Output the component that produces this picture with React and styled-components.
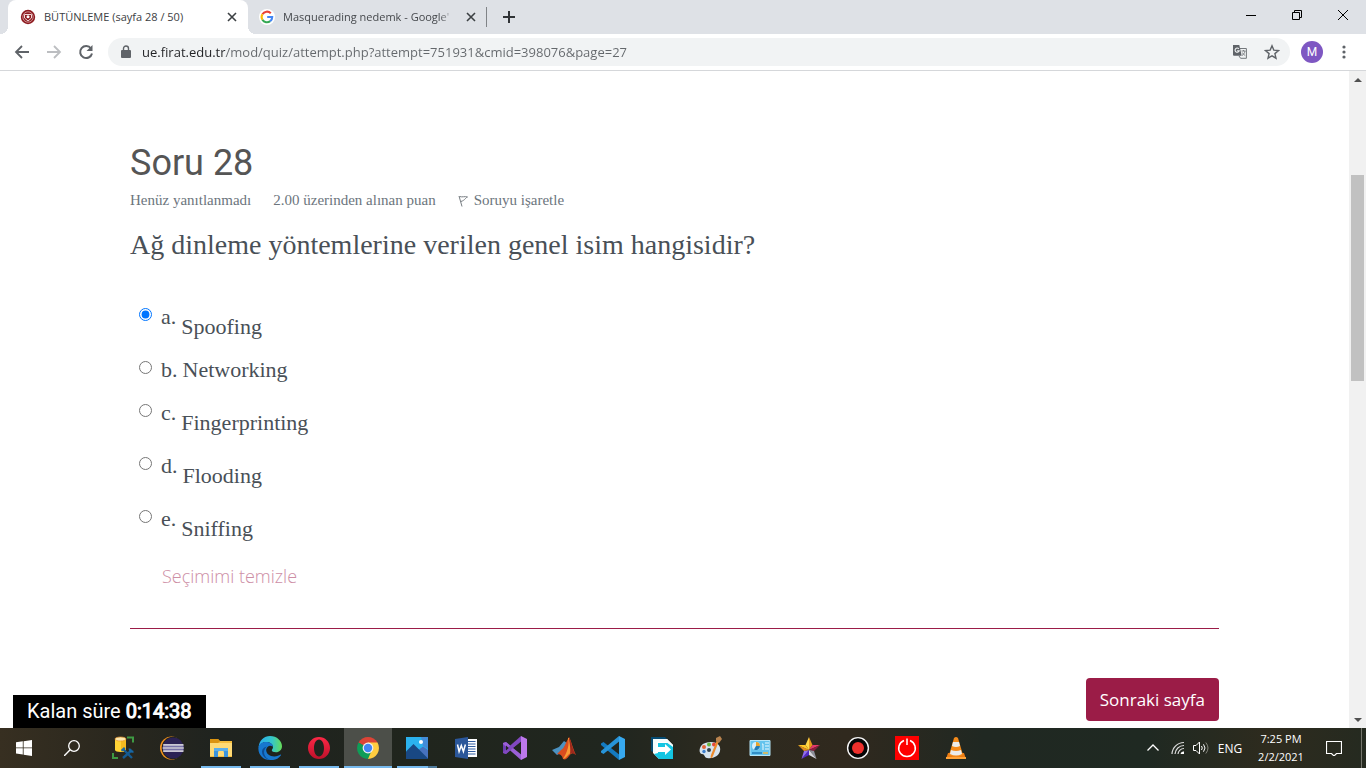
import React, { useState } from "react";
import styled, { createGlobalStyle, css } from "styled-components";

const UI = `"Segoe UI", "Open Sans", "Noto Sans", sans-serif`;
const SERIF = `Georgia, "Liberation Serif", serif`;

const GlobalStyle = createGlobalStyle`
  *, *::before, *::after { box-sizing: border-box; }
  body { margin: 0; background: #fff; font-family: ${UI}; }
  button { font: inherit; color: inherit; background: none; border: 0; padding: 0; cursor: pointer; }
  svg { display: block; flex: none; }
`;

const Screen = styled.div`
  min-height: 100vh;
  display: flex;
  flex-direction: column;
`;

/* Browser chrome */
const TabStrip = styled.div`
  display: flex;
  align-items: stretch;
  height: 34px;
  padding-left: 8px;
  background: #dee1e6;
`;

const Tab = styled.div`
  position: relative;
  display: flex;
  align-items: center;
  gap: 8px;
  width: ${(p) => (p.$active ? 240 : 238)}px;
  padding: ${(p) => (p.$active ? "0 8px 0 12px" : "0 7px 0 11px")};
  border-radius: 8px 8px 0 0;
  color: ${(p) => (p.$active ? "#3c4043" : "#45484c")};
  background: ${(p) => (p.$active ? "#fff" : "transparent")};
  font-size: 11px;
  line-height: 16px;

  ${(p) =>
    p.$active &&
    css`
      &::before,
      &::after {
        content: "";
        position: absolute;
        bottom: 0;
        width: 8px;
        height: 8px;
      }
      &::before {
        right: 100%;
        background: radial-gradient(circle at 0 0, transparent 8px, #fff 8px);
      }
      &::after {
        left: 100%;
        background: radial-gradient(circle at 100% 0, transparent 8px, #fff 8px);
      }
    `}
`;

const TabTitle = styled.span`
  flex: 1;
  min-width: 0;
  white-space: nowrap;
  ${(p) => p.$fade && css`mask-image: linear-gradient(to left, transparent, #000 16px);`}
`;

const IconButton = styled.button`
  display: flex;
  align-items: center;
  justify-content: center;
  flex: none;
  width: ${(p) => p.$w || 16}px;
  height: ${(p) => p.$h || 16}px;
`;

const TabDivider = styled.div`
  width: 1px;
  height: 20px;
  align-self: center;
  background: #808387;
`;

const WindowControls = styled.div`
  display: flex;
  margin-left: auto;
`;

const Toolbar = styled.div`
  display: flex;
  align-items: center;
  height: 37px;
  padding: 0 12px 0 6px;
  background: #fff;
  border-bottom: 1px solid #d5d7da;
`;

const NavButtons = styled.div`
  display: flex;
  margin-right: 6px;
`;

const AddressBar = styled.div`
  flex: 1;
  display: flex;
  align-items: center;
  gap: 8px;
  height: 28px;
  padding: 0 2px 0 12px;
  border-radius: 14px;
  background: #f1f3f4;
`;

const AddressInput = styled.input`
  flex: 1;
  min-width: 0;
  height: 28px;
  padding: 0 0 0 2px;
  border: 0;
  outline: 0;
  color: transparent;
  background: linear-gradient(to right, #202124 85px, #64686c 85px);
  background-clip: text;
  font-family: ${UI};
  font-size: 13px;
`;

const Avatar = styled.button`
  width: 22px;
  height: 22px;
  margin: 0 11px;
  border-radius: 50%;
  background: #7e57c2;
  color: #fff;
  font-family: Roboto, sans-serif;
  font-size: 12px;
  line-height: 22px;
`;

/* Page */
const Viewport = styled.div`
  position: relative;
  flex: 1;
  display: flex;
`;

const Main = styled.main`
  flex: 1;
  padding: 70px 130px 7px;
`;

const QuestionTitle = styled.h3`
  margin: 0;
  color: #555;
  font-family: Roboto, sans-serif;
  font-size: 36px;
  font-weight: 400;
  line-height: 44px;
`;

const QuestionInfo = styled.div`
  display: flex;
  gap: 22px;
  margin-top: 5px;
  color: #6c757d;
  font-family: ${SERIF};
  font-size: 15px;
  line-height: 20px;
`;

const FlagLink = styled.a`
  display: flex;
  align-items: center;
  gap: 5px;
  color: inherit;
  text-decoration: none;
`;

const Fieldset = styled.fieldset`
  margin: 0;
  padding: 17px 0 0;
  border: 0;
  color: #495057;
  font-family: ${SERIF};
`;

const QuestionText = styled.legend`
  float: left;
  width: 100%;
  margin: 0 0 37px;
  padding: 0;
  font-size: 28px;
  line-height: 36px;
`;

const Option = styled.div`
  display: flex;
  align-items: flex-start;
  clear: both;
  height: ${(p) => (p.$flat ? 43 : 53)}px;
  padding-left: 9px;
`;

const Radio = styled.input`
  width: 13px;
  height: 13px;
  margin: 8px 9px 0 0;
`;

const OptionLabel = styled.label`
  display: flex;
  gap: 5px;
  font-size: 22px;
  line-height: 34px;
`;

const Answer = styled.span`
  padding-top: ${(p) => (p.$flat ? 0 : 10)}px;
`;

const ClearLink = styled.a`
  display: inline-block;
  margin: 7px 0 0 32px;
  color: #cd8ea5;
  font-size: 18px;
  font-weight: 300;
  line-height: 28px;
  text-decoration: none;
`;

const Actions = styled.div`
  display: flex;
  justify-content: flex-end;
  margin-top: 38px;
  padding-top: 49px;
  border-top: 1px solid #9b1c47;
`;

const NextButton = styled.button`
  height: 43px;
  padding: 0 14px;
  border-radius: 4px;
  background: #9b1c47;
  color: #fff;
  font-size: 17px;
`;

const Timer = styled.div`
  position: absolute;
  left: 13px;
  bottom: 0;
  padding: 0 14px;
  background: #000;
  color: #fff;
  font-family: Roboto, sans-serif;
  font-size: 20px;
  line-height: 33px;

  b {
    font-weight: 400;
    -webkit-text-stroke: 1px #fff;
  }
`;

const Scrollbar = styled.div`
  display: flex;
  flex-direction: column;
  width: 17px;
  background: #f1f1f1;
`;

const Track = styled.div`
  flex: 1;
  padding: 87px 2px 0;
`;

const Thumb = styled.div`
  height: 206px;
  background: #c1c1c1;
`;

/* Taskbar */
const Taskbar = styled.div`
  display: flex;
  height: 40px;
  color: #fff;
  background: linear-gradient(
    to right,
    #372f21 0,
    #29271e 9%,
    #1f231f 16%,
    #20251d 30%,
    #20261f 45%,
    #2d2a1f 53%,
    #30291e 62%,
    #202822 72%,
    #1f2922 84%,
    #2e2b1e 93%,
    #252a20 100%
  );
`;

const Apps = styled.div`
  display: flex;
  gap: 1px;
  margin-left: 3px;
`;

const TaskButton = styled.button`
  position: relative;
  display: flex;
  align-items: center;
  justify-content: center;
  width: 48px;
  height: 40px;
  background: ${(p) => (p.$state === "active" ? "#4c4f49" : "transparent")};

  &::after {
    content: "";
    position: absolute;
    bottom: 0;
    height: 2px;
    left: ${(p) => (p.$state === "active" ? 0 : 4)}px;
    right: ${(p) => (p.$state === "active" ? 0 : 4)}px;
    background: ${(p) =>
      !p.$state
        ? "transparent"
        : p.$state === "group"
        ? "linear-gradient(to right, #76b9ed 31px, #4f7b9c 31px)"
        : "#76b9ed"};
  }
`;

const Tray = styled.div`
  display: flex;
  align-items: center;
  margin-left: auto;
  font-size: 12px;
`;

const Language = styled.button`
  width: 26px;
  margin: 0 13px 0 5px;
  font-size: 12px;
`;

const Clock = styled.button`
  width: 50px;
  font-size: 11px;
  line-height: 18px;
`;

const ShowDesktop = styled.button`
  width: 5px;
  height: 40px;
  border-left: 1px solid #74756c;
`;

const Svg = ({ s = 24, h, v, children, ...rest }) => (
  <svg width={s} height={h || s} viewBox={v || `0 0 ${s} ${h || s}`} fill="none" aria-hidden="true" {...rest}>
    {children}
  </svg>
);

const Stroke = ({ d, s = 16, h, w = 2, c = "#5f6368", ...rest }) => (
  <Svg s={s} h={h}>
    <path d={d} stroke={c} strokeWidth={w} {...rest} />
  </Svg>
);

const FiratIcon = () => (
  <Svg s={16}>
    <circle cx="8" cy="8" r="7.2" fill="#8e1b20" />
    <circle cx="8" cy="8" r="5.2" stroke="#d9a9ab" strokeWidth=".8" />
    <path d="M4.500 5.500h7v3.500L8 12 4.500 9z" stroke="#f1dada" strokeWidth="1" />
    <circle cx="8" cy="7.800" r="1.500" fill="#fff" />
  </Svg>
);

const GoogleIcon = () => (
  <Svg s={16}>
    <circle cx="8" cy="8" r="8" fill="#fff" />
    <path d="M3.4 5.3a5.3 5.3 0 0 1 8.4-1" stroke="#ea4335" strokeWidth="2.1" />
    <path d="M3.4 5.3a5.3 5.3 0 0 0 0 5.4" stroke="#fbbc05" strokeWidth="2.1" />
    <path d="M3.4 10.7a5.3 5.3 0 0 0 7.8 1.5" stroke="#34a853" strokeWidth="2.1" />
    <path d="M11.2 12.2A5.3 5.3 0 0 0 13.2 8H8.2" stroke="#4285f4" strokeWidth="2.1" />
  </Svg>
);

const TranslateIcon = () => (
  <Svg s={16}>
    <path d="M7 4.5h7.4v9.8H8.6L7 12" stroke="#74787c" strokeWidth="1" fill="#f1f3f4" />
    <path d="M1 1h6.3l2.4 10.8H2a1 1 0 0 1-1-1z" fill="#5f6368" />
    <path d="M6.8 4.8a2.1 2.1 0 1 0 .4 2H5.1" stroke="#f1f3f4" strokeWidth="1.1" />
    <path d="M9.5 7h4M11.5 6v1M13 7c-.4 2-1.4 3.5-3 4.5M10.3 8.5c.7 1.4 1.5 2.3 2.9 3" stroke="#74787c" strokeWidth=".9" />
  </Svg>
);

const StarIcon = () => (
  <Svg s={16}>
    <path d="M8 1.8l1.8 4.3 4.7.4-3.6 3.1 1.1 4.6L8 11.8l-4 2.4 1.1-4.6L1.5 6.5l4.7-.4z" stroke="#5f6368" strokeWidth="1.4" />
  </Svg>
);

const ICONS = {
  Sql: (
    <>
      <path d="M16 1.500h6v5M2 17v5h5" stroke="#3e9a43" strokeWidth="2" />
      <path d="M4 3v11c0 1.200 2.500 2 5.500 2s5.500-.800 5.500-2V3z" fill="#ffd335" />
      <path d="M10 3h5v11c0 1.200-2 1.900-5 2z" fill="#f3b91f" />
      <ellipse cx="9.5" cy="3" rx="5.500" ry="2" fill="#fce7ad" stroke="#e79429" strokeWidth=".7" />
      <path d="M12 13l9 9M21 14l-9 8" stroke="#155a91" strokeWidth="2.400" />
      <path d="M10.500 14.800l3.200-3M18.500 12.500c.200 2.500 1.500 3.500 4 3.300" stroke="#1767a5" strokeWidth="2" />
    </>
  ),
  Eclipse: (
    <>
      <circle cx="11.500" cy="12" r="11.500" fill="#f7941e" />
      <circle cx="12.900" cy="12" r="11.200" fill="#20231f" />
      <circle cx="13.200" cy="12" r="10.600" fill="#2c2255" />
      <path d="M3.200 9h20.300M2.700 12h21M3.200 15h20.300" stroke="#fff" strokeWidth="1.400" />
      <path d="M3 10.500h20.500M3 13.500h20.500" stroke="#7771a8" strokeWidth="1.400" />
    </>
  ),
  Explorer: (
    <>
      <path d="M1 3h8l2 2h12v16H1z" fill="#f5bd3d" />
      <path d="M1 3h8l2 2.5L9 7H1z" fill="#dc9410" />
      <path d="M1 7h22v13H1z" fill="#ffda75" />
      <path d="M5 21v-9h14v9h-4v-4a3 3 0 0 0-6 0v4z" fill="#3c94dd" />
      <path d="M5 12h14v3H5z" fill="#5caee9" />
    </>
  ),
  Edge: (
    <>
      <defs>
        <linearGradient id="eg" x1="2" y1="8" x2="24" y2="8" gradientUnits="userSpaceOnUse">
          <stop stopColor="#2bb0ec" />
          <stop offset=".55" stopColor="#35c7ca" />
          <stop offset="1" stopColor="#66dd58" />
        </linearGradient>
      </defs>
      <path d="M0.6 11C1.5 4 6 0 12 0c7 0 12 5 12 10.2 0 3.6-2.8 6-6 6-2.7 0-4.2-1-4.2-2 0-.8 1.2-1.3 1.2-3.2C15 8 11.8 6 8.3 6 4.800 6 2 8 .6 11z" fill="url(#eg)" />
      <path d="M.4 12C.6 8 4 6 8 6c3.600 0 7 2 7 4.700 0 0-3-2-5.200 0-3.300 3-1.200 8 3.200 9.300 4.500 1.300 8-.5 9.200-1.300.7-.4 1 .2.6.7A12 12 0 0 1 12 24C5.200 24 0 18.700.4 12z" fill="#1778cf" />
      <path d="M8.800 10.500c-5 4.500-2.800 11.700 3.500 13.300C8 23.600 4 20 4 15.500c0-2.300 1.800-4.300 4.800-5z" fill="#0d4d94" />
    </>
  ),
  Opera: (
    <>
      <defs>
        <linearGradient id="og" x1="0" y1="0" x2="0" y2="24" gradientUnits="userSpaceOnUse">
          <stop stopColor="#ff2947" />
          <stop offset="1" stopColor="#bb1029" />
        </linearGradient>
      </defs>
      <path fillRule="evenodd" d="M12 1c6 0 11 4.900 11 11s-5 11-11 11S1 18.100 1 12 6 1 12 1zm0 2.500c-3 0-5 3.800-5 8.500s2 8.500 5 8.500 5-3.800 5-8.500-2-8.500-5-8.500z" fill="url(#og)" />
    </>
  ),
  Chrome: (
    <>
      <path d="M12 12L2.500 6.500A11 11 0 0 1 21.500 6.500z" fill="#db4437" />
      <path d="M12 12L2.500 6.500A11 11 0 0 0 12 23l4.700-8.300z" fill="#0f9d58" />
      <path d="M12 12h4.700L12 23A11 11 0 0 0 21.500 6.500H12z" fill="#ffcd40" />
      <circle cx="12" cy="12" r="5.400" fill="#f1f1f1" />
      <circle cx="12" cy="12" r="4.200" fill="#4285f4" />
    </>
  ),
  Photos: (
    <>
      <path d="M1 1h22v22H1z" fill="#2bb2ee" />
      <path d="M12 15l6-4.500 5 3.500v9H12z" fill="#4772be" />
      <path d="M16 1h7v12l-5-3z" fill="#438cd8" />
      <path d="M1 15.500L8.500 8 23 22.500V23H1z" fill="#194883" />
      <circle cx="16" cy="6" r="2" fill="#fff" />
    </>
  ),
  Word: (
    <>
      <path d="M13 3h10v18H13z" fill="#fff" />
      <path d="M14 5.500h7.500M14 8h7.500M14 10.500h7.500M14 13h7.500M14 15.500h7.500M14 18h7.500" stroke="#315ea2" strokeWidth="1.200" />
      <path d="M1 3l13-2v22L1 21z" fill="#2b579a" />
      <path d="M3.500 8.500l1.600 7 2.200-6 2.100 6 2-7" stroke="#fff" strokeWidth="1.500" />
    </>
  ),
  VisualStudio: (
    <>
      <path d="M0 7l3-1 4 3.500v5L3 18l-3-1z" fill="#6d3db2" />
      <path d="M0 7l3-1 17 14-2 4L0 8z" fill="#9a5fd6" />
      <path d="M0 17l3 1L20 4l-2-4L0 16z" fill="#8148c0" />
      <path d="M3 9.500v5L5.800 12zM10.500 12l7.500-5.500v11z" fill="#20251e" />
      <path d="M18 0l6 3v18l-6 3z" fill="#bd78ec" />
    </>
  ),
  Matlab: (
    <>
      <path d="M0 14l7-3 5-6 3 2-6 10-4 2z" fill="#4b91c1" />
      <path d="M5 18l4-4c3-1 5-8 8-13 2 3 4 12 7 18-3-3-5-2-7 1-2 3-4 4-6 3-1-4-3-5-6-5z" fill="#d94d1f" />
      <path d="M16 2c2 6-1 15-5 21 4-1 5-6 9-6-1-5-2-11-3-15z" fill="#fa9b35" />
      <path d="M17 1c3 6 3 12 7 18-3-2-4-2-6-1 1-6-1-13-1-17z" fill="#9e291c" />
    </>
  ),
  VsCode: (
    <>
      <path d="M0 7.500L2.500 6 20 20l-2 4L0 9z" fill="#147ac0" />
      <path d="M0 16.500L2.500 18 20 4l-2-4L0 15z" fill="#2794d8" />
      <path d="M18 0l6 3v18l-6 3z" fill="#37a9ef" />
    </>
  ),
  Transfer: (
    <>
      <path d="M1 1h14l3 3v12l-9 3-8-4z" fill="#064b72" />
      <path d="M3 3h14l6 6v14H9l-6-6z" fill="#fff" />
      <path d="M8 7h11l4 3v13H9l-5-5 4-1z" fill="#13c5e2" />
      <path d="M17 3l6 6v2l-7-5H7L5 17l-2-1V3z" fill="#f4fcfd" />
      <path d="M7 11h8V8l6 5.500-6 5.500v-3H7z" fill="#fff" />
    </>
  ),
  Paint: (
    <>
      <path d="M12 6c7 0 10 4 9 9s-7 8-13 7c-3-.500-2-4-5-4-3-.500-3-5-1-8s6-4 10-4z" fill="#d6e3ef" />
      <circle cx="5" cy="11" r="2" fill="#e16437" /><circle cx="10" cy="8.500" r="2" fill="#67b440" /><circle cx="15" cy="8.500" r="2" fill="#e54939" /><circle cx="5" cy="15.500" r="1.700" fill="#3b7dcd" /><circle cx="10" cy="14" r="2" fill="#31404c" />
      <path d="M20 5l-6 15c-2 4-3 2-2-1l6-15z" fill="#ec8a2d" />
      <path d="M17 2l4-2 2 3-3 4-3-2z" fill="#b9834e" />
    </>
  ),
  ControlPanel: (
    <>
      <path d="M2 4.500h20v15H2z" fill="#65c3ed" stroke="#b6e5f8" />
      <circle cx="8" cy="10" r="4" fill="#d9f0fa" /><path d="M8 10V6a4 4 0 0 1 4 4z" fill="#e7a42e" /><path d="M8 10h4a4 4 0 0 1-6 3.500z" fill="#247bb4" />
      <path d="M14 8h1v6M17 7h4M17 10h4M17 13h4" stroke="#eaf8ff" /><path d="M4 17h10" stroke="#227cb8" strokeWidth="1.500" /><path d="M15 17h5" stroke="#efb642" strokeWidth="1.500" />
    </>
  ),
  StarApp: (
    <>
      <path d="M12 1L8.500 9 12 14z" fill="#ffd84a" />
      <path d="M12 1l3.500 8-3.500 5z" fill="#e59a1c" />
      <path d="M15.500 9H23l-11 5z" fill="#e33b69" />
      <path d="M23 9l-6 6-5-1z" fill="#8e1e3e" />
      <path d="M12 14l5 1 2.500 8z" fill="#8d8f9b" />
      <path d="M12 14v5l7.500 4z" fill="#d7d7df" />
      <path d="M12 14l-7.500 9 7.500-4z" fill="#5126c9" />
      <path d="M7 15l5-1-7.500 9z" fill="#8f6cf0" />
      <path d="M1 9l11 5-5 1z" fill="#e38b1e" />
      <path d="M1 9h7.500l3.500 5z" fill="#ffc928" />
    </>
  ),
  Recorder: (
    <>
      <circle cx="12" cy="12" r="10.400" fill="#060606" stroke="#f5f5f5" strokeWidth="1.400" />
      <circle cx="12" cy="12" r="6" fill="#ee302c" />
    </>
  ),
  Power: (
    <>
      <path d="M0 0h24v24H0z" fill="#fe0000" />
      <path d="M9 4.500a8.300 8.300 0 1 0 6 0M12 2.500V9" stroke="#fff" strokeWidth="1.500" />
    </>
  ),
  Vlc: (
    <>
      <path d="M4 17h16l2 6H2z" fill="#ec7b12" />
      <path d="M10 2q2-2 4 0l5 17q-7 4-14 0z" fill="#f58b1b" />
      <path d="M9 6h6l1 4q-4 2-8 0zM7 14q5 2 10 0l1 4q-6 3-12 0z" fill="#ececeb" />
      <path d="M2 22h20" stroke="#ffa338" strokeWidth="2" />
    </>
  ),
};

const APPS = [
  ["Sql"],
  ["Eclipse"],
  ["Explorer", "open"],
  ["Edge", "open"],
  ["Opera", "open"],
  ["Chrome", "active"],
  ["Photos", "group"],
  ["Word"],
  ["VisualStudio"],
  ["Matlab"],
  ["VsCode"],
  ["Transfer"],
  ["Paint"],
  ["ControlPanel"],
  ["StarApp"],
  ["Recorder"],
  ["Power"],
  ["Vlc"],
];

const OPTIONS = [
  { key: "a", text: "Spoofing" },
  { key: "b", text: "Networking", flat: true },
  { key: "c", text: "Fingerprinting" },
  { key: "d", text: "Flooding" },
  { key: "e", text: "Sniffing" },
];

const CLOSE = "M4 4l8 8M12 4l-8 8";

function BrowserChrome() {
  return (
    <header>
      <TabStrip>
        <Tab $active>
          <FiratIcon />
          <TabTitle>BÜTÜNLEME (sayfa 28 / 50)</TabTitle>
          <IconButton aria-label="Close tab"><Stroke d={CLOSE} w={1.6} c="#3c4043" /></IconButton>
        </Tab>
        <Tab>
          <GoogleIcon />
          <TabTitle $fade>Masquerading nedemk - Google'</TabTitle>
          <IconButton aria-label="Close tab"><Stroke d={CLOSE} w={1.6} c="#3c4043" /></IconButton>
        </Tab>
        <TabDivider />
        <IconButton $w={44} $h={34} aria-label="New tab"><Stroke d="M8 2v12M2 8h12" c="#303336" /></IconButton>
        <WindowControls>
          <IconButton $w={46} $h={29} aria-label="Minimize"><Stroke s={10} d="M0 5.500h10" w={1} c="#000" /></IconButton>
          <IconButton $w={46} $h={29} aria-label="Restore"><Stroke s={10} d="M.5 2.500h7v7h-7zM2.500 2.500v-2h7v7h-2" w={1} c="#000" /></IconButton>
          <IconButton $w={46} $h={29} aria-label="Close"><Stroke s={10} d="M0 0l10 10M10 0L0 10" w={1} c="#000" /></IconButton>
        </WindowControls>
      </TabStrip>
      <Toolbar>
        <NavButtons>
          <IconButton $w={32} $h={28} aria-label="Back"><Stroke d="M15 8H2M8 2L2 8l6 6" w={1.800} /></IconButton>
          <IconButton $w={32} $h={28} aria-label="Forward"><Stroke d="M1 8h13M8 2l6 6-6 6" w={1.800} c="#bcbec1" /></IconButton>
          <IconButton $w={32} $h={28} aria-label="Reload">
            <Svg s={16}>
              <path d="M13 4.500A6 6 0 1 0 14 9.500" stroke="#5f6368" strokeWidth="2" />
              <path d="M14.500 1v6h-6z" fill="#5f6368" />
            </Svg>
          </IconButton>
        </NavButtons>
        <AddressBar>
          <Svg s={12} h={14}>
            <path d="M2 5h8a1 1 0 0 1 1 1v6a1 1 0 0 1-1 1H2a1 1 0 0 1-1-1V6a1 1 0 0 1 1-1z" fill="#5f6368" />
            <path d="M3.500 5.500V3.500a2.500 2.500 0 0 1 5 0v2" stroke="#5f6368" strokeWidth="1.400" />
          </Svg>
          <AddressInput
            aria-label="Address"
            defaultValue="ue.firat.edu.tr/mod/quiz/attempt.php?attempt=751931&cmid=398076&page=27"
          />
          <IconButton aria-label="Translate"><TranslateIcon /></IconButton>
          <IconButton $w={32} $h={28} aria-label="Bookmark"><StarIcon /></IconButton>
        </AddressBar>
        <Avatar aria-label="Profile">M</Avatar>
        <IconButton $w={20} aria-label="Menu">
          <Svg s={4} h={16}>
            <g fill="#5f6368"><circle cx="2" cy="3" r="1.600" /><circle cx="2" cy="8" r="1.600" /><circle cx="2" cy="13" r="1.600" /></g>
          </Svg>
        </IconButton>
      </Toolbar>
    </header>
  );
}

function Question() {
  const [selected, setSelected] = useState("a");
  return (
    <>
      <QuestionTitle>Soru 28</QuestionTitle>
      <QuestionInfo>
        <span>Henüz yanıtlanmadı</span>
        <span>2.00 üzerinden alınan puan</span>
        <FlagLink href="#">
          <Svg s={11} h={13}>
            <path d="M1 2l3 10.500M1.500 2.500c3 1 5-.500 8 .5-2 .5-2 3-6.500 4.500" stroke="#777d82" />
          </Svg>
          Soruyu işaretle
        </FlagLink>
      </QuestionInfo>
      <Fieldset>
        <QuestionText>Ağ dinleme yöntemlerine verilen genel isim hangisidir?</QuestionText>
        {OPTIONS.map(({ key, text, flat }) => (
          <Option key={key} $flat={flat}>
            <Radio
              type="radio"
              name="answer"
              id={`answer-${key}`}
              checked={selected === key}
              onChange={() => setSelected(key)}
            />
            <OptionLabel htmlFor={`answer-${key}`}>
              <span>{key}.</span>
              <Answer $flat={flat}>{text}</Answer>
            </OptionLabel>
          </Option>
        ))}
      </Fieldset>
      <ClearLink href="#">Seçimimi temizle</ClearLink>
      <Actions>
        <NextButton>Sonraki sayfa</NextButton>
      </Actions>
    </>
  );
}

function SystemTaskbar() {
  return (
    <Taskbar>
      <TaskButton aria-label="Start">
        <Svg s={16}>
          <path d="M0 2.300L6.800 1.300v6.200H0zM7.600 1.200L16 0v7.500H7.600zM0 8.300h6.800v6.300L0 13.600zM7.600 8.300H16V16l-8.400-1.300z" fill="#fff" />
        </Svg>
      </TaskButton>
      <TaskButton aria-label="Search">
        <Svg s={16}>
          <circle cx="10" cy="6" r="5.300" stroke="#fff" strokeWidth="1.300" />
          <path d="M6.200 9.800L0 16" stroke="#fff" strokeWidth="1.400" />
        </Svg>
      </TaskButton>
      <Apps>
        {APPS.map(([name, state]) => (
          <TaskButton key={name} $state={state} aria-label={name}>
            <Svg s={24}>{ICONS[name]}</Svg>
          </TaskButton>
        ))}
      </Apps>
      <Tray>
        <IconButton $w={26} aria-label="Hidden icons"><Stroke s={12} h={8} d="M.5 6.500L6 1l5.500 5.500" w={1.300} c="#fff" /></IconButton>
        <IconButton $w={24} aria-label="Network">
          <Svg s={14}>
            <path d="M1 13A12 12 0 0 1 13 1.500M4 13a9 9 0 0 1 9-8.500M7 13a6 6 0 0 1 6-5.500" stroke="#ddd" strokeWidth="1.200" />
            <path d="M9.500 13a3 3 0 0 1 3.500-2.500V13z" fill="#fff" />
          </Svg>
        </IconButton>
        <IconButton $w={22} aria-label="Volume">
          <Svg s={16}>
            <path d="M.5 5.500H3L6.500 2v12L3 10.500H.5z" stroke="#fff" />
            <path d="M8.500 6q1.500 2 0 4M10.500 4.300q3 3.700 0 7.400" stroke="#fff" />
            <path d="M12.800 2.500q4.400 5.500 0 11" stroke="#85867d" />
          </Svg>
        </IconButton>
        <Language>ENG</Language>
        <Clock>7:25 PM<br />2/2/2021</Clock>
        <IconButton $w={55} $h={40} aria-label="Notifications">
          <Stroke s={16} d="M.5 1.500h15v12h-5L8 16l-2.500-2.500h-5z" w={1.200} c="#fff" />
        </IconButton>
        <ShowDesktop aria-label="Show desktop" />
      </Tray>
    </Taskbar>
  );
}

export default function App() {
  return (
    <Screen>
      <GlobalStyle />
      <BrowserChrome />
      <Viewport>
        <Main><Question /></Main>
        <Scrollbar>
          <IconButton $w={17} $h={17} aria-label="Scroll up"><Svg s={8} h={4}><path d="M0 4l4-4 4 4z" fill="#505050" /></Svg></IconButton>
          <Track><Thumb /></Track>
          <IconButton $w={17} $h={17} aria-label="Scroll down"><Svg s={8} h={4}><path d="M0 0l4 4 4-4z" fill="#505050" /></Svg></IconButton>
        </Scrollbar>
        <Timer>Kalan süre <b>0:14:38</b></Timer>
      </Viewport>
      <SystemTaskbar />
    </Screen>
  );
}
